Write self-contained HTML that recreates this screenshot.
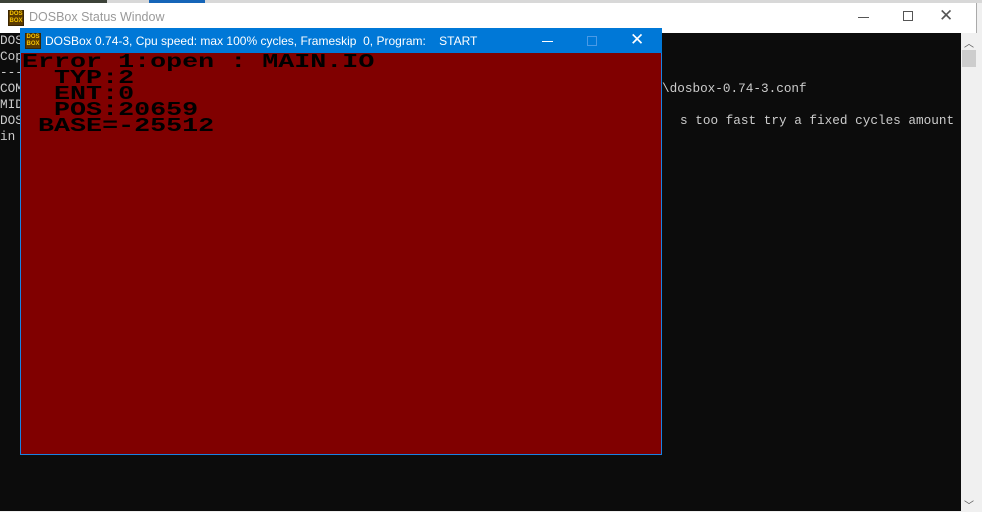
<!DOCTYPE html>
<html><head><style>
*{margin:0;padding:0;box-sizing:border-box}
body{width:982px;height:511px;overflow:hidden;background:#f0f0f0;position:relative;font-family:"Liberation Sans",sans-serif}
.a{position:absolute}
.con{font-family:"Liberation Mono",monospace;font-size:12.7px;color:#cccccc;white-space:pre;line-height:16px}
.dos{font-family:"Liberation Mono",monospace;font-weight:bold;font-size:26.7px;color:#000;white-space:pre;line-height:16px;transform:scaleY(0.72);transform-origin:0 0;letter-spacing:0}
.ico{width:16px;height:16px;background:#5a3a00;border:1px solid #3a2500}
.ico div{font:bold 6px/7px "Liberation Sans",sans-serif;color:#f7c400;text-align:center}
</style></head><body>
<div class="a" style="left:0;top:0;width:107px;height:3px;background:#3c4238"></div>
<div class="a" style="left:107px;top:0;width:42px;height:3px;background:#d8d8d8"></div>
<div class="a" style="left:149px;top:0;width:56px;height:3px;background:#1565b8"></div>
<div class="a" style="left:205px;top:0;width:777px;height:3px;background:#d8d8d8"></div>
<div class="a" style="left:0;top:3px;width:977px;height:508px;background:#fff;border-right:1px solid #aaa"></div>
<div class="a ico" style="left:8px;top:10px"><div>DOS</div><div>BOX</div></div>
<div class="a" style="left:29px;top:10px;font-size:12.5px;color:#999">DOSBox Status Window</div>
<div class="a" style="left:858px;top:17px;width:11px;height:1px;background:#555"></div>
<div class="a" style="left:903px;top:11px;width:10px;height:10px;border:1px solid #555"></div>
<div class="a" style="left:939px;top:6px;font-size:17px;color:#555">✕</div>
<div class="a" style="left:0;top:33px;width:961px;height:478px;background:#0c0c0c"></div>
<div class="a" style="left:961px;top:33px;width:16px;height:478px;background:#f0f0f0"></div>
<div class="a" style="left:962px;top:50px;width:14px;height:17px;background:#cdcdcd"></div>
<div class="a" style="left:964px;top:35px;font-size:10px;color:#555">︿</div>
<div class="a" style="left:964px;top:497px;font-size:10px;color:#555">﹀</div>
<div class="a con" style="left:0;top:33px">DOS
Cop
---
COM
MID
DOS
in</div>
<div class="a con" style="left:662px;top:81px">\dosbox-0.74-3.conf</div>
<div class="a con" style="left:680px;top:113px">s too fast try a fixed cycles amount</div>
<div class="a" style="left:20px;top:28px;width:642px;height:427px;background:#800000;border:1px solid #1a82e2"></div>
<div class="a" style="left:20px;top:28px;width:642px;height:25px;background:#0078d7"></div>
<div class="a ico" style="left:25px;top:33px"><div>DOS</div><div>BOX</div></div>
<div class="a" style="left:45px;top:34px;font-size:12px;color:#fff;white-space:pre">DOSBox 0.74-3, Cpu speed: max 100% cycles, Frameskip  0, Program:    START</div>
<div class="a" style="left:542px;top:41px;width:11px;height:1px;background:#fff"></div>
<div class="a" style="left:587px;top:36px;width:10px;height:10px;border:1px solid #4a9ae6"></div>
<div class="a" style="left:630px;top:30px;font-size:17px;color:#fff">✕</div>
<div class="a dos" style="left:22px;top:57px">Error 1:open : MAIN.IO</div>
<div class="a dos" style="left:22px;top:73px">  TYP:2</div>
<div class="a dos" style="left:22px;top:89px">  ENT:0</div>
<div class="a dos" style="left:22px;top:105px">  POS:20659</div>
<div class="a dos" style="left:22px;top:121px"> BASE=-25512</div>
</body></html>
